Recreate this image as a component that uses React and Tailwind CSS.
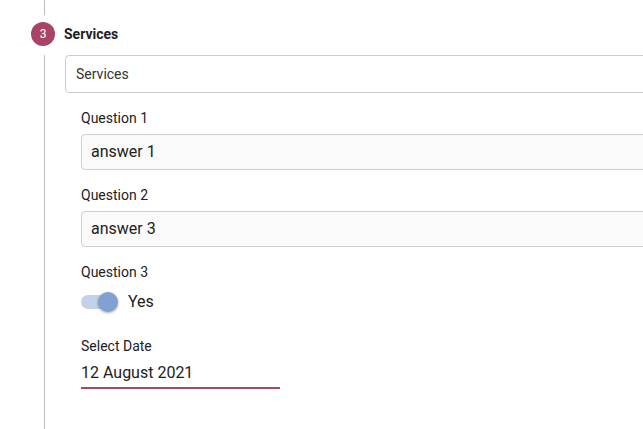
import React, { useState } from 'react';

function Field({ label, value }) {
  return (
    <div className="flex flex-col">
      <label className="text-[14px] leading-[16px] text-[#212121] mb-[8px]">{label}</label>
      <div className="h-[36px] w-[600px] border border-[#cfcfcf] rounded-[4px] bg-[#fafafa] flex items-center pl-[9px] text-[16px] text-[#212121]">
        {value}
      </div>
    </div>
  );
}

export default function App() {
  const [on, setOn] = useState(true);

  return (
    <div className="w-[643px] h-[429px] bg-white overflow-hidden relative" style={{ fontFamily: 'Roboto, "Noto Sans", sans-serif' }}>
      {/* stepper line */}
      <div className="absolute left-[44px] top-0 h-[15px] w-px bg-[#bdbdbd]" />
      <div className="absolute left-[44px] top-[55px] bottom-0 w-px bg-[#bdbdbd]" />

      <div className="pt-[22px] pl-[31px]">
        <div className="flex items-center">
          <div className="w-[24px] h-[24px] rounded-full bg-[#a94466] text-white text-[12px] flex items-center justify-center">3</div>
          <span className="ml-[9px] text-[14px] font-bold text-[#212121]">Services</span>
        </div>

        <div className="ml-[34px] mt-[9px] h-[38px] w-[600px] border border-[#cccccc] rounded-[4px] flex items-center pl-[10px] text-[14px] text-[#333333]">
          Services
        </div>

        <div className="ml-[50px] mt-[17px] flex flex-col gap-[17px]">
          <Field label="Question 1" value="answer 1" />
          <Field label="Question 2" value="answer 3" />

          <div className="flex flex-col">
            <label className="text-[14px] leading-[16px] text-[#212121]">Question 3</label>
            <button onClick={() => setOn(!on)} className="mt-[12px] flex items-center h-[20px]">
              <span className="relative w-[34px] h-[14px] rounded-full bg-[#c3d2e9]">
                <span className="absolute right-[-3px] top-[-3px] w-[20px] h-[20px] rounded-full bg-[#80a1d1] shadow-[0_1px_3px_rgba(0,0,0,0.35)]" />
              </span>
              <span className="ml-[13px] text-[16px] text-[#212121]">Yes</span>
            </button>
          </div>

          <div className="flex flex-col mt-[9px]">
            <label className="text-[14px] leading-[16px] text-[#212121]">Select Date</label>
            <div className="w-[199px] mt-[9px] pb-[4px] border-b-2 border-[#a8476a] text-[16px] leading-[20px] text-[#212121]">
              12 August 2021
            </div>
          </div>
        </div>
      </div>
    </div>
  );
}
